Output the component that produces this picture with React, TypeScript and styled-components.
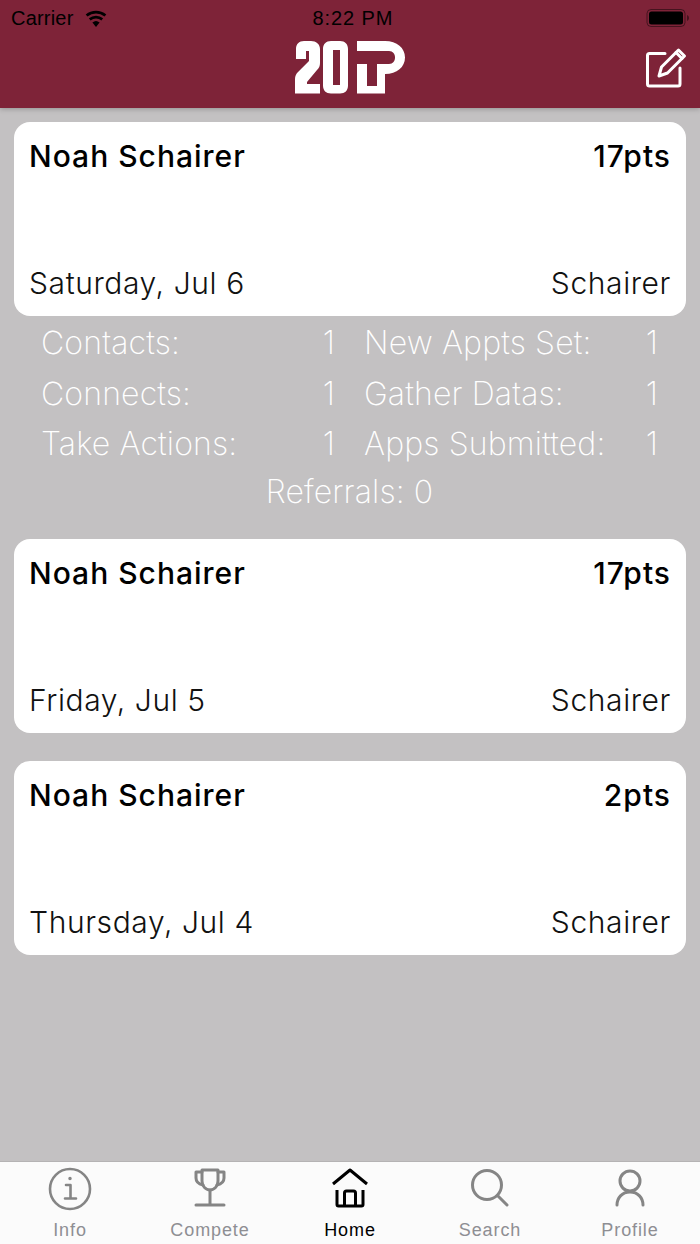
import { ReactNode } from 'react';
import styled, { createGlobalStyle } from 'styled-components';

const GlobalStyle = createGlobalStyle`
  html, body {
    margin: 0;
    padding: 0;
    background: #c3c1c2;
  }
  * {
    box-sizing: border-box;
  }
`;

const Page = styled.div`
  width: 700px;
  height: 1244px;
  display: flex;
  flex-direction: column;
  background: #c3c1c2;
  font-family: 'Inter', 'Liberation Sans', sans-serif;
  overflow: hidden;
`;

const Header = styled.header`
  height: 108px;
  flex: none;
  background: #7e2338;
  display: flex;
  flex-direction: column;
  box-shadow: 0 1px 5px rgba(0, 0, 0, 0.25);
  position: relative;
`;

const StatusBar = styled.div`
  height: 36px;
  flex: none;
  display: grid;
  grid-template-columns: 1fr auto 1fr;
  align-items: center;
  padding: 0 10px 0 11px;
  color: #000;
  font-size: 20px;
  font-family: 'Liberation Sans', sans-serif;
`;

const Carrier = styled.div`
  display: flex;
  align-items: center;
  gap: 10px;
  letter-spacing: 0.2px;
`;

const Clock = styled.div`
  font-weight: 400;
  letter-spacing: 0.9px;
  margin-left: 5px;
`;

const Battery = styled.div`
  justify-self: end;
  display: flex;
`;

const NavBar = styled.div`
  flex: 1;
  display: flex;
  justify-content: center;
  padding-top: 5px;
  position: relative;
`;

const EditButton = styled.div`
  position: absolute;
  right: 13px;
  top: 11px;
  line-height: 0;
`;

const Content = styled.main`
  flex: 1;
  padding: 14px 14px 0;
  display: flex;
  flex-direction: column;
`;

const Card = styled.section<{ $gap: number }>`
  height: 194px;
  flex: none;
  background: #fff;
  border-radius: 16px;
  margin-bottom: ${({ $gap }) => $gap}px;
  padding: 14px 15px 13px;
  display: flex;
  flex-direction: column;
  justify-content: space-between;
`;

const CardRow = styled.div`
  display: flex;
  justify-content: space-between;
  align-items: center;
  height: 40px;
`;

const Name = styled.span`
  font-size: 30px;
  font-weight: 450;
  color: #000;
  letter-spacing: 1px;
`;

const Sub = styled.span`
  font-size: 30px;
  font-weight: 300;
  color: #111;
  letter-spacing: 0.6px;
`;

const Stats = styled.div`
  padding: 1.5px 28px 0 27px;
  margin-bottom: 26px;
  color: #fff;
  font-weight: 200;
  font-size: 32px;
  letter-spacing: 0.15px;
`;

const StatGrid = styled.div`
  display: grid;
  grid-template-columns: 294px 1fr;
  column-gap: 29px;
`;

const Stat = styled.div`
  display: flex;
  justify-content: space-between;
  height: 50.5px;
  align-items: center;
`;

const Referrals = styled.div`
  text-align: center;
  height: 43.5px;
  line-height: 45px;
`;

const TabBar = styled.nav`
  height: 83px;
  flex: none;
  background: #fbfbfb;
  border-top: 1px solid #b5b3b4;
  display: grid;
  grid-template-columns: repeat(5, 1fr);
`;

const TabItem = styled.div<{ $active?: boolean }>`
  display: flex;
  flex-direction: column;
  align-items: center;
  padding-top: 5px;
  color: ${({ $active }) => ($active ? '#000' : '#8e8e93')};
  font-family: 'Liberation Sans', sans-serif;
  font-size: 18px;
`;

const TabIcon = styled.div<{ $active?: boolean }>`
  height: 48px;
  line-height: 0;
  color: ${({ $active }) => ($active ? '#000' : '#858585')};
`;

const TabLabel = styled.span`
  margin-top: 5px;
  letter-spacing: 0.9px;
`;

const stroke = { fill: 'none', stroke: 'currentColor', strokeWidth: 3, strokeLinecap: 'round', strokeLinejoin: 'round' } as const;

const WifiIcon = () => (
  <svg width="24" height="18" viewBox="0 0 24 18">
    <path d="M12 18l-3.6-4.4a5.6 5.6 0 0 1 7.2 0z" fill="#000" />
    <path d="M6.6 11.4a8.6 8.6 0 0 1 10.8 0l1.7-2.1a11.3 11.3 0 0 0-14.2 0z" fill="#000" />
    <path d="M3.5 7.6a13.4 13.4 0 0 1 17 0l1.8-2.2a16.2 16.2 0 0 0-20.6 0z" fill="#000" />
  </svg>
);

const BatteryIcon = () => (
  <svg width="44" height="20" viewBox="0 0 44 20">
    <rect x="1" y="1.5" width="38" height="17" rx="4" fill="none" stroke="#000" strokeOpacity="0.45" />
    <rect x="3" y="3.5" width="34" height="13" rx="2.5" fill="#000" />
    <path d="M41 7v6c1.2-.4 2-1.6 2-3s-.8-2.600-2-3z" fill="#000" fillOpacity="0.45" />
  </svg>
);

const Logo = () => (
  <svg width="111" height="53" viewBox="0 0 111 53" fill="#fff">
    <path d="M1 18V8C1 3 4 0 9 0H16C21 0 25 3 25 8V22C25 25 24 27 22 29L12 41V43H25V52.500H0V38C0 35 1 33 3 31L14 20V10H11V18Z" />
    <path fillRule="evenodd" d="M28 8C28 3 31 0 36 0H45C50 0 53 3 53 8V44.500C53 49.500 50 52.500 45 52.500H36C31 52.500 28 49.500 28 44.500ZM38 9V44H45V9Z" />
    <path d="M62 0H90C102 0 110 7 110 16.500S102 33 90 33H82V23H94C98 23 100 20 100 16.500S98 10 94 10H62Z" />
    <path d="M62 23H72V45H82V23H90V52.500H62Z" />
  </svg>
);

const EditIcon = () => (
  <svg width="42" height="42" viewBox="0 0 42 42" {...stroke} stroke="#fff">
    <path d="M20 6.500H4.500a2 2 0 0 0-2 2V37a2 2 0 0 0 2 2H33a2 2 0 0 0 2-2V21" />
    <path d="M14 29l2.500-9L33.500 3l6 6-17 17z" />
    <path d="M31 5.500l6 6" />
  </svg>
);

const InfoIcon = () => (
  <svg width="44" height="44" viewBox="0 0 44 44" {...stroke} strokeWidth={2.6}>
    <circle cx="22" cy="22" r="20" />
    <circle cx="22" cy="11.500" r="1" fill="currentColor" strokeWidth="1.500" />
    <path d="M18 18h4.500v13M17 31.500h11" />
  </svg>
);

const TrophyIcon = () => (
  <svg width="34" height="40" viewBox="0 0 34 40" {...stroke}>
    <path d="M9 3h16v11c0 5-3.500 9-8 9s-8-4-8-9z" />
    <path d="M9 5H3v6c0 3 2.500 6 7 7M25 5h6v6c0 3-2.500 6-7 7" />
    <path d="M17 23v15M3 38h28" />
  </svg>
);

const HomeIcon = () => (
  <svg width="38" height="42" viewBox="0 0 38 42" {...stroke} strokeLinecap="butt">
    <path d="M2 17L19 3l17 14" />
    <path d="M6 23V37.500a1.500 1.500 0 0 0 1.500 1.500H30.500A1.500 1.500 0 0 0 32 37.500V23" />
    <path d="M13.500 39V26a2 2 0 0 1 2-2h7a2 2 0 0 1 2 2v13" />
  </svg>
);

const SearchIcon = () => (
  <svg width="38" height="40" viewBox="0 0 38 40" {...stroke}>
    <circle cx="16" cy="18" r="14.500" />
    <path d="M26.500 28.500l9.500 9.500" />
  </svg>
);

const ProfileIcon = () => (
  <svg width="30" height="40" viewBox="0 0 30 40" {...stroke}>
    <circle cx="15" cy="14" r="10" />
    <path d="M2 38c0-7 5-13 13-13s13 6 13 13" />
  </svg>
);

const tabs: { label: string; icon: ReactNode; active?: boolean }[] = [
  { label: 'Info', icon: <InfoIcon /> },
  { label: 'Compete', icon: <TrophyIcon /> },
  { label: 'Home', icon: <HomeIcon />, active: true },
  { label: 'Search', icon: <SearchIcon /> },
  { label: 'Profile', icon: <ProfileIcon /> },
];

const stats = [
  ['Contacts:', '1'],
  ['New Appts Set:', '1'],
  ['Connects:', '1'],
  ['Gather Datas:', '1'],
  ['Take Actions:', '1'],
  ['Apps Submitted:', '1'],
];

const ScoreCard = ({ pts, date, gap }: { pts: string; date: string; gap: number }) => (
  <Card $gap={gap}>
    <CardRow>
      <Name>Noah Schairer</Name>
      <Name>{pts}</Name>
    </CardRow>
    <CardRow>
      <Sub>{date}</Sub>
      <Sub>Schairer</Sub>
    </CardRow>
  </Card>
);

export default function App() {
  return (
    <Page>
      <GlobalStyle />
      <Header>
        <StatusBar>
          <Carrier>
            Carrier
            <WifiIcon />
          </Carrier>
          <Clock>8:22 PM</Clock>
          <Battery>
            <BatteryIcon />
          </Battery>
        </StatusBar>
        <NavBar>
          <Logo />
          <EditButton>
            <EditIcon />
          </EditButton>
        </NavBar>
      </Header>
      <Content>
        <ScoreCard pts="17pts" date="Saturday, Jul 6" gap={0} />
        <Stats>
          <StatGrid>
            {stats.map(([label, value]) => (
              <Stat key={label}>
                <span>{label}</span>
                <span>{value}</span>
              </Stat>
            ))}
          </StatGrid>
          <Referrals>Referrals: 0</Referrals>
        </Stats>
        <ScoreCard pts="17pts" date="Friday, Jul 5" gap={28} />
        <ScoreCard pts="2pts" date="Thursday, Jul 4" gap={0} />
      </Content>
      <TabBar>
        {tabs.map(tab => (
          <TabItem key={tab.label} $active={tab.active}>
            <TabIcon $active={tab.active}>{tab.icon}</TabIcon>
            <TabLabel>{tab.label}</TabLabel>
          </TabItem>
        ))}
      </TabBar>
    </Page>
  );
}
